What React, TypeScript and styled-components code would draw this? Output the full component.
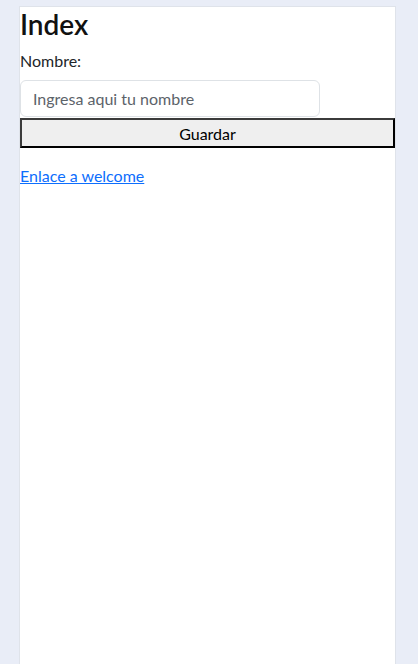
import styled, { createGlobalStyle } from "styled-components";

const GlobalStyle = createGlobalStyle`
  html, body {
    margin: 0;
    padding: 0;
    background: #e9edf7;
    font-family: "Segoe UI", Lato, "Noto Sans", sans-serif;
    color: #212529;
  }
  * { box-sizing: border-box; }
`

const Card = styled.main`
  margin: 6px 0 0 19px;
  width: 377px;
  min-height: 680px;
  background: #fff;
  border: 1px solid #dfe3ea;
  border-bottom: none;
  display: flex;
  flex-direction: column;
  align-items: flex-start;
`

const Title = styled.h1`
  margin: 0 0 8px;
  font-size: 28px;
  font-weight: 600;
  line-height: 34px;
  color: #111;
`

const Label = styled.label`
  font-size: 16px;
  line-height: 24px;
  margin-bottom: 7px;
`

const Form = styled.form`
  display: flex;
  flex-direction: column;
  align-items: flex-start;
  width: 100%;
`

const Input = styled.input`
  width: 300px;
  height: 37px;
  padding: 6px 12px;
  font: inherit;
  font-size: 16px;
  color: #212529;
  border: 1px solid #dee2e6;
  border-radius: 6px;
  outline: none;
  &::placeholder {
    color: #5c636a;
  }
`

const Button = styled.button`
  width: 100%;
  height: 30px;
  margin-top: 1px;
  font: inherit;
  font-size: 16px;
  color: #000;
  background: #efefef;
  border: 2px solid #000;
  border-top-color: #3b3b3b;
  border-left-color: #3b3b3b;
  padding: 1px 6px;
  cursor: pointer;
`

const NavLink = styled.a`
  margin-top: 16px;
  font-size: 16px;
  line-height: 24px;
  color: #0d6efd;
  text-decoration: underline;
`

function App() {
  return (
    <>
      <GlobalStyle />
      <Card>
        <Title>Index</Title>
        <Form onSubmit={e => e.preventDefault()}>
          <Label htmlFor="nombre">Nombre:</Label>
          <Input id="nombre" type="text" placeholder="Ingresa aqui tu nombre" />
          <Button type="submit">Guardar</Button>
        </Form>
        <NavLink href="#welcome">Enlace a welcome</NavLink>
      </Card>
    </>
  );
}

export default App;
